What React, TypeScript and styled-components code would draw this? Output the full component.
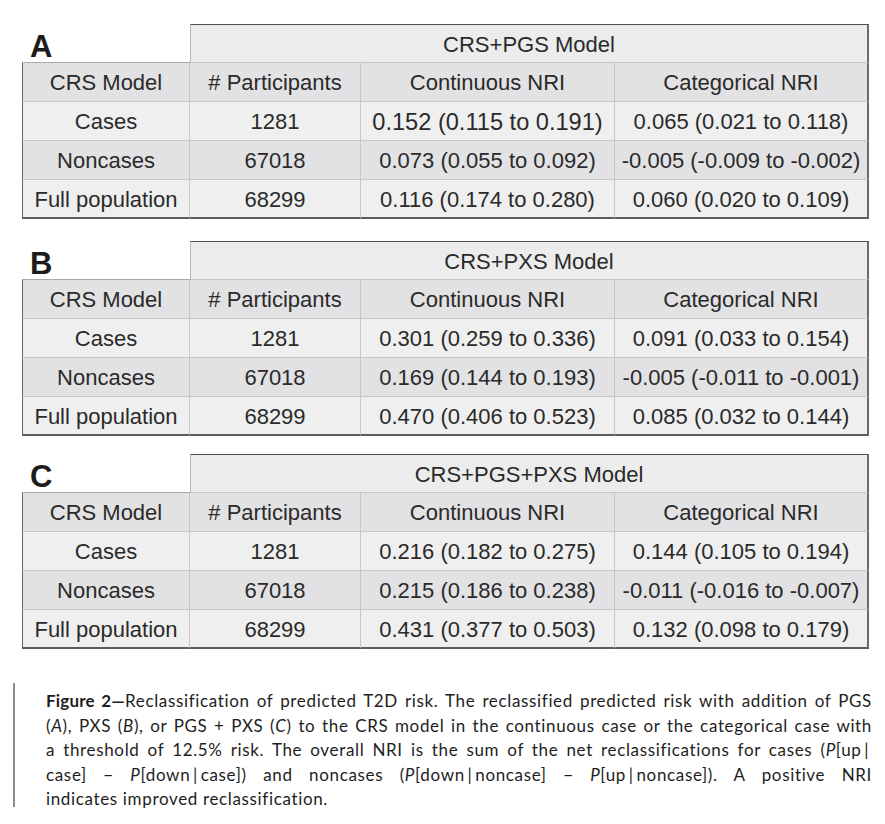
import React from "react";
import styled, { createGlobalStyle } from "styled-components";

const Global = createGlobalStyle`
  html, body { margin: 0; padding: 0; background: #ffffff; }
  body { font-family: "Liberation Sans", Arial, sans-serif; }
`;

const Page = styled.main`
  width: 885px;
  min-height: 824px;
  box-sizing: border-box;
  padding-top: 24px;
  display: flex;
  flex-direction: column;
`;

const Panels = styled.div`
  display: flex;
  flex-direction: column;
  padding-left: 22px;
`;

const Table = styled.table<{ $space: number }>`
  width: 847px;
  margin-top: ${(p) => p.$space}px;
  table-layout: fixed;
  border-collapse: separate;
  border-spacing: 0;
  font-family: "Liberation Sans", Arial, sans-serif;
  font-size: 22px;
  color: #2a2a2a;
`;

const Col = styled.col<{ $w: number }>`
  width: ${(p) => p.$w}px;
`;

const Row = styled.tr`
  height: 39px;
`;

const LabelCell = styled.th`
  background: #ffffff;
  border-bottom: 1px solid #a9a9a9;
  text-align: left;
  vertical-align: middle;
  padding: 6px 0 0 8px;
  font-size: 31px;
  font-weight: 700;
  color: #1c1c1c;
  line-height: 1;
`;

const GroupCell = styled.th`
  background: #ececec;
  border-top: 1px solid #4f4f4f;
  border-left: 1px solid #b4b4b4;
  border-right: 2px solid #6a6a6a;
  border-bottom: 1px solid #c6c6c6;
  font-weight: 400;
  text-align: center;
  vertical-align: middle;
  padding: 2px 0 0;
`;

const Cell = styled.td<{ $shade: "light" | "dark"; $first?: boolean; $last?: boolean; $bottom?: boolean; $size?: number }>`
  background: ${(p) => (p.$shade === "dark" ? "#e2e2e4" : "#efefef")};
  border-right: ${(p) => (p.$last ? "2px solid #6a6a6a" : "1px solid #c6c6c6")};
  border-left: ${(p) => (p.$first ? "1px solid #666666" : "none")};
  border-bottom: ${(p) => (p.$bottom ? "2px solid #5c5c5c" : "1px solid #c6c6c6")};
  text-align: center;
  vertical-align: middle;
  white-space: nowrap;
  padding: 2px 0 0;
  font-weight: 400;
  font-size: ${(p) => (p.$size ? `${p.$size}px` : "inherit")};
  overflow: visible;
`;

const Caption = styled.figure`
  margin: 34px 0 0 13px;
  display: flex;
  align-items: flex-start;
`;

const Rule = styled.div`
  flex: none;
  width: 2px;
  height: 124px;
  background: #8c8c8c;
`;

const CaptionText = styled.figcaption`
  margin-left: 31px;
  width: 826px;
  padding-top: 6px;
  font-family: Lato, "Open Sans", sans-serif;
  font-size: 17px;
  line-height: 24.5px;
  letter-spacing: 0.65px;
  color: #1e1e1e;
`;

const Line = styled.span<{ $last?: boolean }>`
  display: block;
  text-align: justify;
  text-align-last: ${(p) => (p.$last ? "left" : "justify")};
`;

const Bold = styled.b`
  font-weight: 700;
  letter-spacing: 0.2px;
`;

const Ital = styled.i`
  font-style: italic;
`;

type DataRow = { name: string; n: string; cont: string; cat: string; contSize?: number };

type Panel = { label: string; model: string; space: number; rows: DataRow[] };

const panels: Panel[] = [
  {
    label: "A",
    model: "CRS+PGS Model",
    space: 0,
    rows: [
      { name: "Cases", n: "1281", cont: "0.152 (0.115 to 0.191)", cat: "0.065 (0.021 to 0.118)", contSize: 23.6 },
      { name: "Noncases", n: "67018", cont: "0.073 (0.055 to 0.092)", cat: "-0.005 (-0.009 to -0.002)" },
      { name: "Full population", n: "68299", cont: "0.116 (0.174 to 0.280)", cat: "0.060 (0.020 to 0.109)" },
    ],
  },
  {
    label: "B",
    model: "CRS+PXS Model",
    space: 22,
    rows: [
      { name: "Cases", n: "1281", cont: "0.301 (0.259 to 0.336)", cat: "0.091 (0.033 to 0.154)" },
      { name: "Noncases", n: "67018", cont: "0.169 (0.144 to 0.193)", cat: "-0.005 (-0.011 to -0.001)" },
      { name: "Full population", n: "68299", cont: "0.470 (0.406 to 0.523)", cat: "0.085 (0.032 to 0.144)" },
    ],
  },
  {
    label: "C",
    model: "CRS+PGS+PXS Model",
    space: 18,
    rows: [
      { name: "Cases", n: "1281", cont: "0.216 (0.182 to 0.275)", cat: "0.144 (0.105 to 0.194)" },
      { name: "Noncases", n: "67018", cont: "0.215 (0.186 to 0.238)", cat: "-0.011 (-0.016 to -0.007)" },
      { name: "Full population", n: "68299", cont: "0.431 (0.377 to 0.503)", cat: "0.132 (0.098 to 0.179)" },
    ],
  },
];

const NRITable: React.FC<{ panel: Panel }> = ({ panel }) => (
  <Table $space={panel.space}>
    <colgroup>
      <Col $w={168} />
      <Col $w={171} />
      <Col $w={254} />
      <Col $w={254} />
    </colgroup>
    <thead>
      <Row>
        <LabelCell>{panel.label}</LabelCell>
        <GroupCell colSpan={3}>{panel.model}</GroupCell>
      </Row>
      <Row>
        <Cell as="th" $shade="dark" $first>CRS Model</Cell>
        <Cell as="th" $shade="dark"># Participants</Cell>
        <Cell as="th" $shade="dark">Continuous NRI</Cell>
        <Cell as="th" $shade="dark" $last>Categorical NRI</Cell>
      </Row>
    </thead>
    <tbody>
      {panel.rows.map((r, i) => {
        const shade = i % 2 === 1 ? "dark" : "light";
        const bottom = i === panel.rows.length - 1;
        return (
          <Row key={r.name}>
            <Cell $shade={shade} $first $bottom={bottom}>{r.name}</Cell>
            <Cell $shade={shade} $bottom={bottom}>{r.n}</Cell>
            <Cell $shade={shade} $bottom={bottom} $size={r.contSize}>{r.cont}</Cell>
            <Cell $shade={shade} $bottom={bottom} $last>{r.cat}</Cell>
          </Row>
        );
      })}
    </tbody>
  </Table>
);

const bar = "\u2009|\u2009";

export default function App() {
  return (
    <Page>
      <Global />
      <Panels>
        {panels.map((p) => (
          <NRITable key={p.label} panel={p} />
        ))}
      </Panels>
      <Caption>
        <Rule />
        <CaptionText>
          <Line>
            <Bold>Figure 2—</Bold>Reclassification of predicted T2D risk. The reclassified predicted risk with addition of PGS
          </Line>
          <Line>
            (<Ital>A</Ital>), PXS (<Ital>B</Ital>), or PGS + PXS (<Ital>C</Ital>) to the CRS model in the continuous case or the categorical case with
          </Line>
          <Line>
            a threshold of 12.5% risk. The overall NRI is the sum of the net reclassifications for cases (<Ital>P</Ital>[up{bar}
          </Line>
          <Line>
            case] − <Ital>P</Ital>[down{bar}case]) and noncases (<Ital>P</Ital>[down{bar}noncase] − <Ital>P</Ital>[up{bar}noncase]). A positive NRI
          </Line>
          <Line $last>indicates improved reclassification.</Line>
        </CaptionText>
      </Caption>
    </Page>
  );
}
